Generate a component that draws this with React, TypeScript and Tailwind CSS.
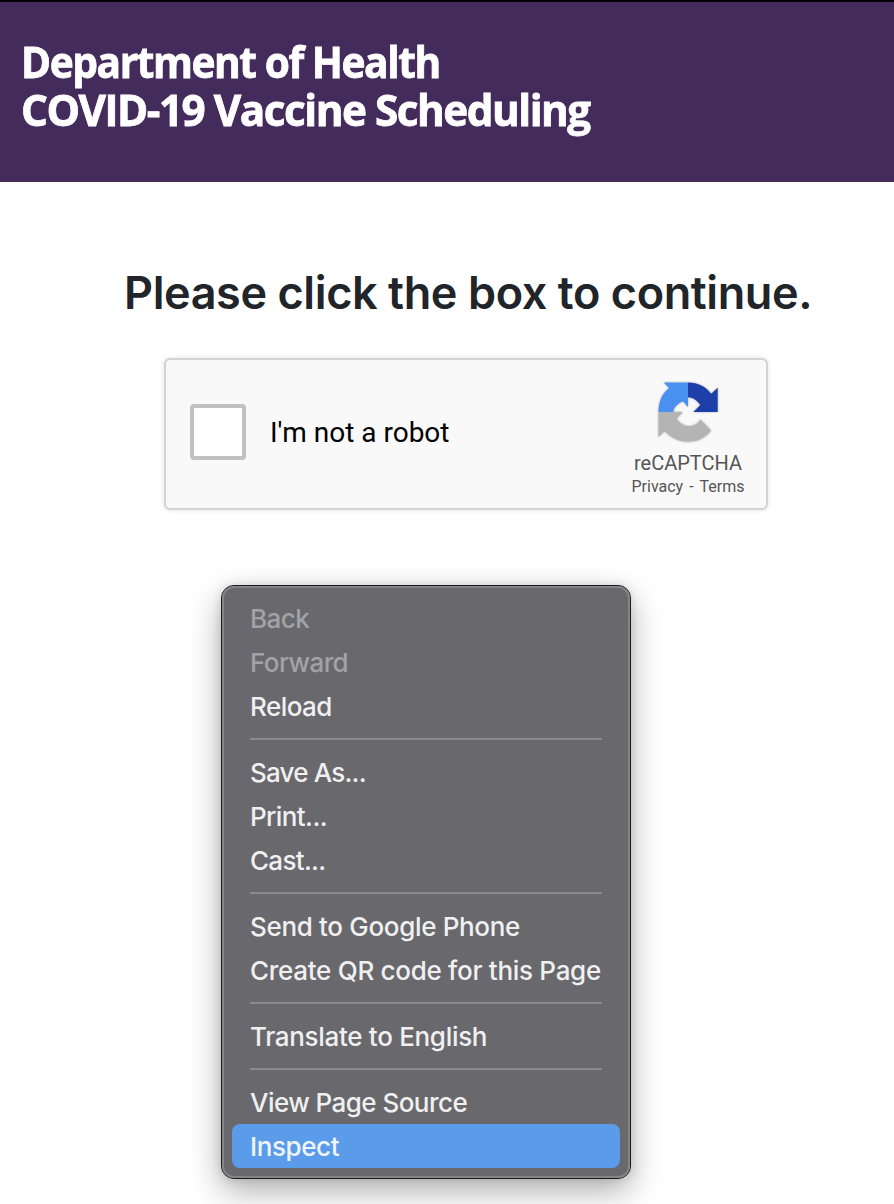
type Item = { label: string; disabled?: boolean; active?: boolean; spacing: string };

const groups: Item[][] = [
  [
    { label: "Back", disabled: true, spacing: "tracking-[-0.55px]" },
    { label: "Forward", disabled: true, spacing: "tracking-[-0.6px]" },
    { label: "Reload", spacing: "tracking-[-0.55px]" },
  ],
  [
    { label: "Save As...", spacing: "tracking-[-0.8px]" },
    { label: "Print...", spacing: "tracking-[-0.6px]" },
    { label: "Cast...", spacing: "tracking-[-0.7px]" },
  ],
  [
    { label: "Send to Google Phone", spacing: "tracking-[-0.33px]" },
    { label: "Create QR code for this Page", spacing: "tracking-[-0.29px]" },
  ],
  [{ label: "Translate to English", spacing: "tracking-[-0.31px]" }],
  [
    { label: "View Page Source", spacing: "tracking-[-0.55px]" },
    { label: "Inspect", active: true, spacing: "tracking-[-0.4px]" },
  ],
];

function RecaptchaLogo() {
  return (
    <svg className="block h-[64px] w-[64px] drop-shadow-[0_0_1px_rgba(0,0,0,0.3)]" viewBox="656 380 64 64">
      <path d="M663.7 382.5H688V407L683 401.3C677 404 673.8 407.5 673.3 412H658.5C658.5 402 662 393.5 669 388Z" fill="#4a90f0" />
      <path d="M688 382.5C698 382.5 706 386.5 711.2 393.8L717.7 387.7V412H693.3L700.3 405C697 400.5 693 397.5 688 397.3Z" fill="#1c3fa9" />
      <path d="M658.5 412H682.8L676.5 418.8C680 423.5 684 426.3 689 426.3C694 426.3 697.5 424 700.5 419.5L711 430.5C705 438 697.5 441.8 688 441.8C679 441.8 671 438 664.8 431L658.5 437Z" fill="#b4b4b4" />
    </svg>
  );
}

function ContextMenu() {
  return (
    <div className="ml-[221px] mt-[75px] h-[594px] w-[410px] rounded-[13px] border border-[#1c1c1e] bg-[#69686d] shadow-[0_12px_32px_rgba(0,0,0,0.32),0_0_10px_rgba(0,0,0,0.12)]">
      <div className="h-full rounded-[12px] border-2 border-[#858488] px-2 pt-2">
        {groups.map((group, i) => (
          <div key={i}>
            {i > 0 && <div className="mx-[18px] my-[10px] h-[2px] bg-[#8a898e]" />}
            {group.map((item) => (
              <div
                key={item.label}
                className={`flex h-11 items-center whitespace-nowrap rounded-[8px] px-[18px] font-['Inter',sans-serif] text-[26px] font-medium ${item.spacing} ${
                  item.active ? "bg-[#5a9cea] text-[#f0f5fc]" : item.disabled ? "text-[#a3a2a7]" : "text-[#f0f0f0]"
                }`}
              >
                {item.label}
              </div>
            ))}
          </div>
        ))}
      </div>
    </div>
  );
}

export default function App() {
  return (
    <div className="h-[1204px] w-[894px] overflow-hidden bg-white">
      <header className="h-[182px] border-t-2 border-black bg-[#432b5b] pl-[21px] pt-[36px]">
        <h1 className="whitespace-nowrap font-['Open_Sans',sans-serif] text-[43px] font-bold leading-[48px] text-white [-webkit-text-stroke:0.8px_white]">
          <span className="block origin-left scale-x-[0.945] tracking-[-1.5px]">Department of Health</span>
          <span className="block origin-left scale-x-[0.982] tracking-[-1.5px]">COVID-19 Vaccine Scheduling</span>
        </h1>
      </header>
      <main>
        <h2 className="ml-[124px] mt-[83px] whitespace-nowrap font-['Inter',sans-serif] text-[45px] font-semibold leading-[56px] tracking-[-0.4px] text-[#212529]">
          Please click the box to continue.
        </h2>
        <section className="ml-[164px] mt-[37px] flex h-[152px] w-[604px] items-start rounded-[6px] border-2 border-[#d3d3d3] bg-[#f9f9f9] font-['Roboto',sans-serif] shadow-[0_0_4px_1px_rgba(0,0,0,0.08)]">
          <div className="ml-[24px] mt-[44px] h-14 w-14 shrink-0 rounded-[4px] border-4 border-[#c1c1c1] bg-white" />
          <div className="ml-[24px] mt-[57px] w-[300px] shrink-0 whitespace-nowrap text-[28px] leading-8 text-black">I'm not a robot</div>
          <div className="ml-[38px] mt-[20px] flex w-[160px] shrink-0 flex-col items-center text-[#555555]">
            <RecaptchaLogo />
            <div className="mt-[7px] text-[20px] leading-6">reCAPTCHA</div>
            <div className="text-[16px] leading-6 [word-spacing:2px]">Privacy&nbsp;-&nbsp;Terms</div>
          </div>
        </section>
        <ContextMenu />
      </main>
    </div>
  );
}
